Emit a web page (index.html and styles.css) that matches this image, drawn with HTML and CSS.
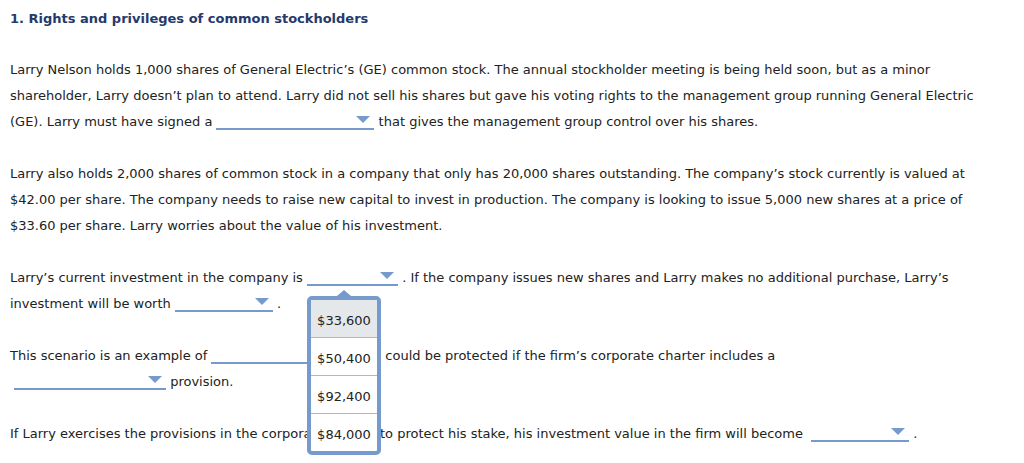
FILE: index.html
```html
<!DOCTYPE html>
<html lang="en">
<head>
    <meta charset="UTF-8">
    <title>Rights and privileges of common stockholders</title>
    <link rel="stylesheet" href="styles.css">
</head>
<body>
    <div class="question">
        <h1 class="title">1. Rights and privileges of common stockholders</h1>

        <p>Larry Nelson holds 1,000 shares of General Electric’s (GE) common stock. The annual stockholder meeting is being held soon, but as a minor shareholder, Larry doesn’t plan to attend. Larry did not sell his shares but gave his voting rights to the management group running General Electric (GE). Larry must have signed a <span class="select w-158"><span class="caret"></span></span> that gives the management group control over his shares.</p>

        <p>Larry also holds 2,000 shares of common stock in a company that only has 20,000 shares outstanding. The company’s stock currently is valued at $42.00 per share. The company needs to raise new capital to invest in production. The company is looking to issue 5,000 new shares at a price of $33.60 per share. Larry worries about the value of his investment.</p>

        <p>Larry’s current investment in the company is <span class="select w-91"><span class="caret"></span><span class="menu"><span class="option active">$33,600</span><span class="option">$50,400</span><span class="option">$92,400</span><span class="option">$84,000</span></span></span> . If the company issues new shares and Larry makes no additional purchase, Larry’s investment will be worth <span class="select w-98"><span class="caret"></span></span> .</p>

        <p>This scenario is an example of <span class="select w-124"><span class="caret"></span></span> . Larry could be protected if the firm’s corporate charter includes a<br><span class="select w-152 first"><span class="caret"></span></span> provision.</p>

        <p>If Larry exercises the provisions in the corporate charter to protect his stake, his investment value in the firm will become <span class="select w-98 last"><span class="caret"></span></span> .</p>
    </div>
</body>
</html>
```

FILE: styles.css
```css
* {
    margin: 0;
    padding: 0;
    box-sizing: border-box;
}

body {
    font-family: 'DejaVu Sans', Verdana, sans-serif;
    font-size: 13px;
    color: #222;
    background: #fff;
}

.question {
    width: 985px;
    padding: 6px 10px;
}

.title {
    font-size: 13px;
    font-weight: bold;
    line-height: 26px;
    color: #253a6a;
    margin-bottom: 25px;
}

p {
    line-height: 26px;
    margin-bottom: 26px;
}

.select {
    position: relative;
    display: inline-block;
    line-height: 13px;
    text-align: right;
    border-bottom: 2px solid #759acb;
    margin-bottom: -4px;
}

.select.first {
    margin-left: 4px;
}

.select.last {
    margin-left: 4px;
}

.w-91 { width: 91px; }
.w-98 { width: 98px; }
.w-124 { width: 124px; }
.w-152 { width: 152px; }
.w-158 { width: 158px; }

.caret {
    display: inline-block;
    width: 0;
    height: 0;
    border-left: 7px solid transparent;
    border-right: 7px solid transparent;
    border-top: 7px solid #759acb;
    margin-right: 4px;
    margin-bottom: 3px;
}

/* open dropdown list */
.menu {
    position: absolute;
    left: 0;
    top: 25px;
    width: 74px;
    display: flex;
    flex-direction: column;
    background: #fff;
    border: 4px solid #759acb;
    border-radius: 5px;
    z-index: 2;
}

.menu::before {
    content: '';
    position: absolute;
    top: -10px;
    left: 26px;
    border-left: 7px solid transparent;
    border-right: 7px solid transparent;
    border-bottom: 6px solid #759acb;
}

.option {
    display: flex;
    align-items: center;
    justify-content: center;
    height: 38px;
    padding-top: 3px;
    line-height: 13px;
    color: #222;
    border-top: 1px solid #a4b9da;
}

.option:first-child {
    border-top: none;
    height: 37px;
}

.option.active {
    background: #e4e8eb;
}
```
